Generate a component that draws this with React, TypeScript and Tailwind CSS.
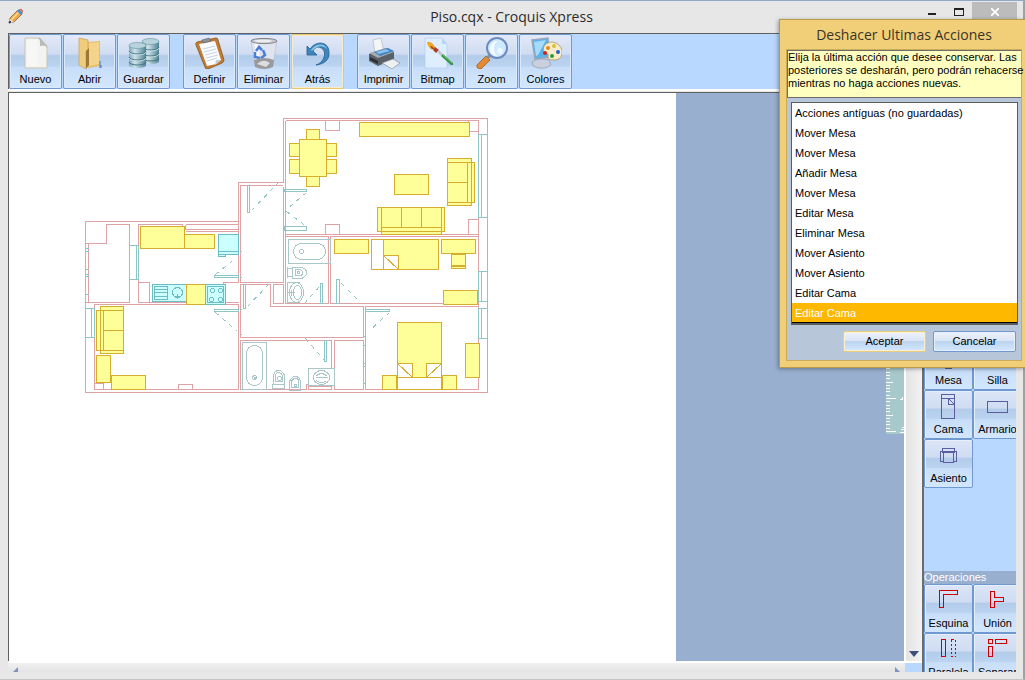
/**
 * Croquis Xpress — floor plan editor with the undo history dialog open.
 */
import type { ReactNode } from "react";

type Box = [x: number, y: number, w: number, h: number];
type Line = [x1: number, y1: number, x2: number, y2: number];

const HISTORY = [
  "Acciones antíguas (no guardadas)",
  "Mover Mesa",
  "Mover Mesa",
  "Añadir Mesa",
  "Mover Mesa",
  "Editar Mesa",
  "Eliminar Mesa",
  "Mover Asiento",
  "Mover Asiento",
  "Editar Cama",
  "Editar Cama",
];

/* ---------- toolbar icons ---------- */

function NewIcon() {
  return (
    <svg viewBox="0 0 32 32" className="size-8">
      <path d="M5 1h15l7 8v22H5z" fill="#f3f3f1" stroke="#c9c5b2" />
      <path d="M17 1c4 1 3 5 3 8 3-1 6-1 7 2V9l-7-8z" fill="#b9b9b7" />
      <path d="M7 3h10v26H7z" fill="#fafafa" opacity=".6" />
    </svg>
  );
}

function OpenIcon() {
  return (
    <svg viewBox="0 0 32 32" className="size-8">
      <path d="M14 5l12-1v25l-12 2z" fill="#e8bf68" />
      <path d="M15 6l10-1v22l-10 2z" fill="#f4d48a" />
      <path d="M5 1l9 2v9l-2 3v17l-7-4z" fill="#f0cd7c" stroke="#d0a248" strokeWidth=".7" />
      <path d="M12 14l3-3v17l-3 4z" fill="#9b7838" />
      <path d="M26 24v7M27 28v3" stroke="#3f78c0" />
    </svg>
  );
}

function Drum({ x, y }: { x: number; y: number }) {
  return (
    <g transform={`translate(${x} ${y})`}>
      <path d="M0 3v20c0 4 17 4 17 0V3z" fill="url(#drum)" />
      <ellipse cx="8.5" cy="3.5" rx="8.5" ry="3" fill="#b8d3dc" stroke="#5f909f" strokeWidth=".6" />
      <path d="M0 9c1 4 16 4 17 0M0 15c1 4 16 4 17 0M0 20c1 4 16 4 17 0" fill="none" stroke="#3f7484" />
      <path d="M0 10c1 4 16 4 17 0M0 16c1 4 16 4 17 0" fill="none" stroke="#d6e8ee" strokeWidth=".8" />
    </g>
  );
}

function SaveIcon() {
  return (
    <svg viewBox="0 0 32 32" className="size-8">
      <defs>
        <linearGradient id="drum">
          <stop offset="0" stopColor="#7fa9b7" />
          <stop offset=".35" stopColor="#cfe2e8" />
          <stop offset="1" stopColor="#4d8293" />
        </linearGradient>
      </defs>
      <Drum x={14} y={1} />
      <Drum x={1} y={5} />
    </svg>
  );
}

function DefineIcon() {
  return (
    <svg viewBox="0 0 32 32" className="size-8">
      <path d="M3 5L22 1q2 0 2 2l6 20q0 2-2 3l-14 6q-3 0-3-2L2 8q-1-2 1-3z" fill="#c17d32" stroke="#8a5218" strokeWidth=".8" />
      <path d="M5 7l16-3 6 19-5 4-9 2z" fill="#fbfcff" />
      <path d="M9 12l12-3M10 15l12-3M11 18l12-3M12 21l12-3M13 24l10-3" stroke="#bfcde0" strokeWidth=".9" />
      <path d="M8 3l7-2 2 3-8 2z" fill="#8d9299" stroke="#5c6066" strokeWidth=".6" />
      <path d="M21 28l1-5 5 0z" fill="#c3cbda" />
    </svg>
  );
}

function BinIcon() {
  return (
    <svg viewBox="0 0 32 32" className="size-8">
      <path d="M3 4l4 25q9 5 18 0l4-25z" fill="#dfe4ee" stroke="#b4b9c6" strokeWidth=".6" />
      <path d="M6 4l3 22h3L10 4z" fill="#f8faff" />
      <path d="M6 23l1 7q9 4 18 0l1-7q-10-4-20 0z" fill="#9a9a9e" />
      <path d="M9 27q6-6 13-1l-4 4z" fill="#dddde0" />
      <ellipse cx="16" cy="4" rx="13" ry="2.600" fill="#c7c9ce" stroke="#85888f" />
      <ellipse cx="15" cy="4" rx="9" ry="1.300" fill="#eceef2" />
      <path d="M8 14l3-4 3 3M15 13l2 5-4 3M12 21l-5-1 0-5" fill="none" stroke="#4a7fd6" strokeWidth="2.500" />
    </svg>
  );
}

function UndoIcon() {
  return (
    <svg viewBox="0 0 32 32" className="size-8">
      <path
        d="M5 9l3 3C14 3 28 4 27 17c0 6-5 10-13 11 10-3 12-17 2-18-2 0-4 2-5 4l4 4H5z"
        fill="#3f86bd"
        stroke="#24608f"
        strokeWidth=".8"
      />
      <path d="M9 13c5-7 14-7 16-1-4-4-10-4-15 2z" fill="#8cc2e6" />
    </svg>
  );
}

function PrintIcon() {
  return (
    <svg viewBox="0 0 32 32" className="size-8">
      <path d="M5 3l8-2 3 14-9 2z" fill="#f4f5f7" stroke="#b5b8bd" strokeWidth=".7" />
      <path d="M1 17l17-6 8 4v7l-16 7-9-5z" fill="#5a6068" />
      <path d="M1 16l17-5 8 4-16 6z" fill="#a3abb4" />
      <path d="M6 15l14-4 6 3-14 5z" fill="#3f83c3" />
      <path d="M8 15l10-3 4 2-11 3z" fill="#8bc0ea" />
      <path d="M14 26l11-4 7 4-8 6z" fill="#eef0f2" stroke="#8b8f95" strokeWidth=".7" />
      <path d="M2 20l8 4v3l-8-4z" fill="#2b2f35" />
    </svg>
  );
}

function BitmapIcon() {
  return (
    <svg viewBox="0 0 32 32" className="size-8">
      <path d="M3 1h17l5 6v24H3z" fill="#dfeeff" stroke="#b3cdeb" strokeWidth=".7" />
      <path d="M20 1v6h5z" fill="#b9d4f2" />
      <path d="M5 5q3-1 6 2l3 4-2 2q-6-1-7-8z" fill="#f0a528" />
      <path d="M8 9q3 0 4 3l-2 0z" fill="#9a4a10" />
      <path d="M13 10l4 3-3 3-3-3z" fill="#b03a2c" />
      <path d="M17 13l4 4-2 2-4-4z" fill="#c3c6cc" />
      <path d="M21 17l10 9v2l-2 0-10-9z" fill="#2f9340" />
      <path d="M21 18l9 8" stroke="#8bdc90" strokeWidth=".7" />
    </svg>
  );
}

function ZoomIcon() {
  return (
    <svg viewBox="0 0 32 32" className="size-8">
      <path d="M1 28l9-9 4 4-9 9q-5 0-4-4z" fill="#e28a35" stroke="#a65a1a" strokeWidth=".8" />
      <path d="M10 20l4-4 2 2-3 4z" fill="#8c9099" />
      <circle cx="21" cy="11" r="10" fill="#cfeafc" stroke="#6d8bc0" strokeWidth="2" />
      <path d="M14 11q1-7 8-7-4 2-4 7t3 8q-7-1-7-8z" fill="#fff" opacity=".8" />
      <circle cx="24" cy="14" r="3" fill="#fff" opacity=".6" />
    </svg>
  );
}

function ColorsIcon() {
  return (
    <svg viewBox="0 0 32 32" className="size-8">
      <path d="M2 3l16-2 1 19-14 2z" fill="#5db2ec" stroke="#98a7bb" strokeWidth="1.500" />
      <path d="M4 5l12-2-8 15-2 1z" fill="#a6dcfa" />
      <path d="M2 25q6-5 17-2l2 5q-8 6-18 1z" fill="#c9cfdc" stroke="#949cad" strokeWidth=".7" />
      <path d="M14 9q5-6 12-3 7 4 6 11-1 6-8 6-6 0-6-3 1-4-3-4-3-3-1-7z" fill="#f8ecc9" stroke="#a99663" strokeWidth=".8" />
      <circle cx="18" cy="11" r="2" fill="#e08a20" />
      <circle cx="24" cy="9" r="2" fill="#d8c038" />
      <circle cx="15" cy="16" r="2" fill="#c82820" />
      <circle cx="28" cy="15" r="2" fill="#2860c8" />
      <circle cx="22" cy="19" r="2" fill="#2f9a3a" />
    </svg>
  );
}

function PencilIcon() {
  return (
    <svg viewBox="0 0 16 16" className="size-4">
      <path d="M1 15l1-5 8-8 4 4-8 8z" fill="#f0a848" stroke="#7d5320" strokeWidth=".7" />
      <path d="M3 11l8-8 1 1-8 8z" fill="#fbdc9c" />
      <path d="M1 15l1-4 4 3z" fill="#f6e6cc" />
      <path d="M1 15l1-2 1 1z" fill="#223a66" stroke="#223a66" />
      <path d="M9 3l2-2 4 4-2 2z" fill="#4a90cf" />
      <path d="M11 1q3-1 4 2v2z" fill="#d86a50" />
    </svg>
  );
}

const TOOL_GROUPS: { label: string; icon: ReactNode; active?: boolean }[][] = [
  [
    { label: "Nuevo", icon: <NewIcon /> },
    { label: "Abrir", icon: <OpenIcon /> },
    { label: "Guardar", icon: <SaveIcon /> },
  ],
  [
    { label: "Definir", icon: <DefineIcon /> },
    { label: "Eliminar", icon: <BinIcon /> },
    { label: "Atrás", icon: <UndoIcon />, active: true },
  ],
  [
    { label: "Imprimir", icon: <PrintIcon /> },
    { label: "Bitmap", icon: <BitmapIcon /> },
    { label: "Zoom", icon: <ZoomIcon /> },
    { label: "Colores", icon: <ColorsIcon /> },
  ],
];

function ToolButton({ label, icon, active }: { label: string; icon: ReactNode; active?: boolean }) {
  return (
    <button
      className={
        "flex h-[55px] w-[53px] flex-col items-center rounded-[2px] border bg-[linear-gradient(#e3e9f8,#d0dcf2_36%,#b3ccea_39%,#b9d3f0_58%,#c8def8_61%,#d2e7ff)] pt-[2px] " +
        (active
          ? "border-[#ecc66c] shadow-[inset_0_0_0_1px_#f8ecc8]"
          : "border-[#6f99d0] shadow-[inset_0_0_0_1px_#dce9fb]")
      }
    >
      {icon}
      <span className="mt-1 leading-3">{label}</span>
    </button>
  );
}

/* ---------- side palette ---------- */

function PaletteButton({ label, children }: { label: string; children: ReactNode }) {
  return (
    <button className="flex h-[49px] w-[49px] shrink-0 flex-col items-center rounded-[2px] border border-[#6f99d0] bg-[linear-gradient(#dbe5f6,#cfdcf2_36%,#b3ccea_39%,#b9d3f0_58%,#c8def8_61%,#d2e7ff)] pt-px shadow-[inset_1px_1px_0_#e6effc]">
      <svg viewBox="0 0 30 30" className="h-[30px] w-[30px]" fill="none" stroke="currentColor" shapeRendering="crispEdges">
        <g transform="translate(.5 .5)">{children}</g>
      </svg>
      <span className="mt-px leading-3 text-black">{label}</span>
    </button>
  );
}

function Palette() {
  return (
    <aside className="flex w-[94px] shrink-0 flex-col overflow-hidden border-l-2 border-[#6c6c6c] bg-[#b9d8ff]">
      <div className="flex w-[98px] flex-wrap pt-[249px] text-[#5c5ca0]">
        <PaletteButton label="Mesa">
          <path d="M5 8h18v14H5zM11 22h6v3h-6z" />
        </PaletteButton>
        <PaletteButton label="Silla">
          <path d="M9 8h11v11H9zM9 5h11" />
        </PaletteButton>
        <PaletteButton label="Cama">
          <path d="M7 2h13v24H7zM7 6h13M14 6v6h6M14 6l6 6" />
        </PaletteButton>
        <PaletteButton label="Armario">
          <path d="M4 9h20v11H4z" />
        </PaletteButton>
        <PaletteButton label="Asiento">
          <path d="M8 7h12v4H8zM9 10h10v11H9zM6 10h3v10H6zM19 10h3v10h-3z" />
        </PaletteButton>
      </div>
      <div className="mt-auto h-[101px] overflow-hidden">
        <h2 className="bg-[#99afd0] leading-[13px] text-white">Operaciones</h2>
        <div className="flex w-[98px] flex-wrap text-[#cc0000]">
          <PaletteButton label="Esquina">
            <path d="M5 4h18v4H9v13H5z" />
          </PaletteButton>
          <PaletteButton label="Unión">
            <path d="M7 5h4v6h9v4h-9v6H7z" />
          </PaletteButton>
          <PaletteButton label="Paralela">
            <path d="M7 4h4v17H7z" />
            <path d="M17 4h4v17h-4z" strokeDasharray="2 2" />
          </PaletteButton>
          <PaletteButton label="Separar">
            <path d="M5 4h4v4H5zM12 4h11v4H12zM5 11h4v10H5z" />
          </PaletteButton>
        </div>
      </div>
    </aside>
  );
}

/* ---------- floor plan ---------- */

const FURNITURE: Box[] = [
  // dining table and chairs
  [306, 129, 13, 10], [306, 176, 13, 10], [289, 143, 10, 13], [289, 159, 10, 14],
  [326, 143, 10, 13], [326, 159, 10, 14], [299, 139, 27, 37],
  // living room
  [359, 122, 110, 14], [394, 174, 34, 20], [447, 158, 24, 47], [467, 162, 7, 40],
  [447, 162, 20, 20], [447, 182, 20, 20], [377, 207, 67, 24], [381, 207, 20, 20],
  [401, 207, 20, 20], [421, 207, 20, 20], [381, 227, 60, 7],
  // kitchen
  [140, 226, 44, 22], [184, 234, 30, 14], [186, 284, 19, 20],
  // study
  [100, 306, 23, 47], [96, 310, 7, 40], [103, 310, 20, 20], [103, 330, 20, 20],
  [96, 355, 14, 27], [111, 375, 34, 14],
  // small bedroom
  [334, 239, 34, 14], [383, 239, 55, 30], [441, 239, 34, 14], [451, 254, 14, 14],
  [451, 265, 14, 1], [443, 290, 34, 14],
  // main bedroom
  [397, 322, 44, 67], [382, 375, 14, 14], [442, 375, 14, 14], [465, 343, 14, 34],
];

const LINEN: Box[] = [
  [371, 239, 12, 30], [383, 255, 15, 14],
  [397, 377, 44, 12], [397, 363, 15, 14], [426, 363, 15, 14],
];

const DOORS: Box[] = [
  [214, 275, 24, 2], [214, 309, 24, 2], [247, 185, 2, 27], [284, 189, 22, 2],
  [284, 226, 22, 4], [320, 283, 2, 20], [336, 279, 3, 24], [243, 284, 2, 24],
  [324, 340, 2, 21], [365, 309, 24, 2],
];

const SWINGS: Line[] = [
  [215, 274, 236, 257], [215, 312, 237, 331], [251, 210, 277, 183], [306, 192, 286, 209],
  [286, 211, 306, 226], [304, 303, 320, 285], [341, 283, 360, 302], [247, 306, 268, 284],
  [305, 338, 324, 360], [389, 312, 369, 330],
];

const WINDOWS: Box[] = [
  [129, 245, 9, 34], [85, 308, 9, 29], [478, 134, 9, 83], [478, 271, 9, 30], [478, 308, 9, 30],
];

const WALLS = [
  "M85 392V221H238V182H283V118H487V392Z",
  "M85 243H106V224H129V302H85M88 243V302",
  "M138 302V224H182V226M185 224V229H238M185 224H238M185 231H238",
  "M138 282H149V302M237 282H223V302M138 302H238",
  "M238 221V282M238 304H94V389H238ZM94 383H103V389M178 389V384H192V389",
  "M282 185H240V282H283V186M285 120H478V389H365V306H478M285 120V303H328M468 120V131H478",
  "M325 120V130H339V120M325 234V224H339V234M468 234V219H478M285 234H478",
  "M285 236H328V303M330 303V236H478M330 303H478",
  "M240 284H270V306H363V337H240ZM273 284H283V303H273Z",
  "M331 368V340H240V389H306V384H308M308 386H331V389H308ZM334 340H363V389H334Z",
];

const boxPath = ([x, y, w, h]: Box) => `M${x} ${y}h${w}v${h}h${-w}z`;
const linePath = ([x1, y1, x2, y2]: Line) => `M${x1} ${y1}L${x2} ${y2}`;

function FloorPlan() {
  return (
    <svg viewBox="80 110 412 288" className="mt-[17px] ml-[71px] h-[288px] w-[412px]" fill="none" shapeRendering="crispEdges">
      <g transform="translate(.5 .5)">
        <path d={WALLS.join("")} stroke="#e0a3a5" />

        <g stroke="#8fc5c7">
          <path d={[...DOORS, ...WINDOWS].map(boxPath).join("")} />
          <path d="M136 245V279M91 308V337M481 134V217M481 271V301M481 308V338" />
          <path d="M85 248h3M85 251h3M85 269h3M85 274h3M85 276h3M85 294h3M239 251h2M239 277h2M239 309h2M239 334h2" />
          <path d="M363 336h2M363 345h2M363 363h2M363 366h2M363 383h2" />
          <path d={SWINGS.map(linePath).join("")} strokeDasharray="4 5" />
        </g>

        {/* bathroom fixtures */}
        <g stroke="#a9c7c8">
          <path d="M288 239h42v24h-42zM242 342h24v47h-24z" />
          <rect x="293" y="243" width="32" height="16" rx="8" />
          <rect x="246" y="345" width="16" height="40" rx="8" />
          <circle cx="301" cy="251" r="2" />
          <circle cx="254" cy="377" r="2" />
          <path d="M253 376l3 3M256 376l-3 3" />
          <path d="M287 266v11M287 268h5v8h-5M292 267h9q5 1 5 5t-5 6h-9zM295 269h4q3 0 3 3t-3 3h-4z" />
          <circle cx="298" cy="272" r="1" />
          <path d="M299 282H287V302H299M287 292h7M291 289v6" />
          <ellipse cx="296" cy="292" rx="7" ry="10" />
          <ellipse cx="297" cy="292" rx="4" ry="7" />
          <path d="M272 388v-4h12v4zM273 384v-9q1-5 5-5t6 5v9M275 381v-5q0-4 3-4t4 4v5z" />
          <circle cx="279" cy="378" r="2" />
          <path d="M289 390h11v-9q-1-5-5-5t-6 5zM291 387v-5q0-4 4-4t3 4v5z" />
          <circle cx="295" cy="385" r="1" />
          <path d="M308 368h26v17h-26z" />
          <ellipse cx="321" cy="377" rx="8" ry="7" />
          <path d="M315 376q6-6 12 0M315 377h12M316 380q5 4 10 0" />
        </g>

        {/* kitchen units */}
        <g fill="#ccffff" stroke="#6dbcc4">
          <path d="M218 234h20v20h-20zM218 251h20M218 254h7v2h-7zM152 284h34v17h-34z" />
          <path d="M154 286h13v13h-13zM154 289h13M154 292h13M154 296h13" />
          <circle cx="177" cy="292" r="5" />
          <path d="M177 293v5M175 296h4" />
        </g>

        <path d={FURNITURE.map(boxPath).join("")} fill="#ffff99" stroke="#d6ae2e" />
        <path d={LINEN.map(boxPath).join("")} fill="#ffffff" stroke="#d6ae2e" />
        <path d="M383 255L398 269M397 363L412 377M441 363L426 377" stroke="#d6ae2e" />

        <g fill="#ccffff" stroke="#6dbcc4">
          <path d="M205 284h20v20h-20zM207 286h16v16h-16z" />
          <circle cx="212" cy="290" r="2" />
          <circle cx="220" cy="290" r="2" />
          <circle cx="211" cy="299" r="2" />
          <circle cx="220" cy="299" r="2" />
        </g>
      </g>
    </svg>
  );
}

function Ruler() {
  const ticks = Array.from({ length: 100 }, (_, i) => {
    const y = Math.round(338 - i * 3.3);
    const length = i % 10 === 0 ? 10 : i % 5 === 0 ? 7 : 4;
    return `M0 ${y}h${length}`;
  });
  return (
    <svg viewBox="0 0 18 341" className="h-[341px] w-[18px] bg-[#a7c9cb]" stroke="#ffffff" fill="none" shapeRendering="crispEdges">
      <g transform="translate(0 .5)">
        <path d={ticks.join("")} />
        <path d="M14 306h2M16 303v3M15 336h3M14 339h4M16 334h2" />
      </g>
    </svg>
  );
}

function Workspace() {
  return (
    <div className="flex min-w-0 flex-1 flex-col">
      <div className="flex min-h-0 flex-1">
        <main className="flex min-w-0 flex-1 overflow-hidden border-t border-l border-[#606060] bg-[#99afd0]">
          <div className="w-[74.5%] shrink-0 bg-white">
            <FloorPlan />
          </div>
          <div className="flex flex-1 justify-end">
            <Ruler />
          </div>
        </main>
        <div className="flex w-[18px] shrink-0 flex-col items-center justify-end border-l-2 border-white bg-linear-to-r from-[#e4e4e4] to-[#f2f2f2] pb-1">
          <svg viewBox="0 0 10 6" className="h-[6px] w-[10px]">
            <path d="M0 0h10L5 6z" fill="#3c5078" />
          </svg>
        </div>
      </div>
      <div className="flex h-[11px] shrink-0 border-t-2 border-white bg-[#b9d8ff]">
        <div className="flex flex-1 items-end justify-between bg-linear-to-b from-[#f0f0f0] to-[#e4e4e4] pr-[5px] pl-[5px]">
          <svg viewBox="0 0 5 5" className="size-[5px]">
            <path d="M0 5L5 0v5z" fill="#7d93bb" />
          </svg>
          <svg viewBox="0 0 5 5" className="size-[5px]">
            <path d="M0 0l5 5H0z" fill="#7d93bb" />
          </svg>
        </div>
        <div className="w-[17px]" />
      </div>
    </div>
  );
}

/* ---------- dialog ---------- */

function DialogButton({ label, primary }: { label: string; primary?: boolean }) {
  return (
    <button
      className={
        "h-[21px] w-[83px] rounded-[2px] border bg-[linear-gradient(#eef2fb,#dbe5f6_45%,#bdd4ef_50%,#d3e8ff)] " +
        (primary
          ? "border-[#e8cd80] shadow-[inset_0_0_0_1px_#faf0d0]"
          : "border-[#6f99d0] shadow-[inset_0_0_0_1px_#e6effb]")
      }
    >
      {label}
    </button>
  );
}

function UndoDialog() {
  return (
    <section
      role="dialog"
      aria-labelledby="undo-title"
      className="absolute top-[19px] right-0 z-10 flex w-[246px] flex-col border border-r-0 border-[#b89a4a] bg-[#f0cf78] pr-[3px] pb-[6px] pl-[6px] shadow-[-1px_1px_4px_rgba(0,0,0,0.35)]"
    >
      <h2 id="undo-title" className="text-center font-['Open_Sans',sans-serif] text-[14px] leading-[29px] text-[#3a3428]">
        Deshacer Ultimas Acciones
      </h2>
      <div className="border border-[#c9ab58] bg-[#b7c7d9]">
        <p className="h-[48px] border border-r-0 border-[#6c6c6c] bg-[#ffffc0] leading-[13px] whitespace-nowrap">
          Elija la última acción que desee conservar. Las
          <br />
          posteriores se desharán, pero podrán rehacerse
          <br />
          mientras no haga acciones nuevas.
        </p>
        <ul className="mt-1 mr-[3px] ml-1 border border-b-2 border-[#5c5c5c] bg-white">
          {HISTORY.map((action, index) => (
            <li key={index}>
              <button
                className={
                  "h-5 w-full pl-[3px] text-left " +
                  (index === HISTORY.length - 1 ? "bg-[#ffb800] text-white shadow-[inset_0_-1px_0_#000]" : "")
                }
              >
                {action}
              </button>
            </li>
          ))}
        </ul>
        <div className="mt-[6px] mr-[5px] mb-2 flex justify-end gap-[7px]">
          <DialogButton label="Aceptar" primary />
          <DialogButton label="Cancelar" />
        </div>
      </div>
    </section>
  );
}

/* ---------- window ---------- */

function TitleBar() {
  return (
    <header className="grid h-8 shrink-0 grid-cols-[1fr_auto_1fr] items-center">
      <div className="pb-[2px] pl-2">
        <PencilIcon />
      </div>
      <h1 className="pb-[2px] font-['Open_Sans',sans-serif] text-[14px] text-[#2b2b2b]">Piso.cqx - Croquis Xpress</h1>
      <div className="flex h-full items-start justify-end pr-[6px]">
        <button aria-label="Minimizar" className="flex h-5 w-[26px] justify-center pt-3">
          <span className="h-[2px] w-2 bg-[#222]" />
        </button>
        <button aria-label="Maximizar" className="flex h-5 w-[27px] justify-center pt-[7px]">
          <span className="h-2 w-[10px] border border-t-2 border-[#222]" />
        </button>
        <button aria-label="Cerrar" className="mt-px flex h-5 w-[45px] items-center justify-center bg-[#bcbcbc]">
          <svg viewBox="0 0 8 8" className="size-2" stroke="#fff" strokeWidth="1.800">
            <path d="M0 0l8 8M8 0L0 8" />
          </svg>
        </button>
      </div>
    </header>
  );
}

export default function App() {
  return (
    <div className="relative h-screen w-full overflow-hidden font-['Liberation_Sans',Arial,sans-serif] text-[11px] text-black">
      <div className="flex h-full flex-col border-t border-r-2 border-b border-t-[#8fa9c4] border-r-[#a3a0a2] border-b-[#c4c4c4] bg-[#e7e7e7]">
        <TitleBar />
        <div className="mr-[7px] mb-[7px] ml-2 flex min-h-0 flex-1 flex-col">
          <nav className="flex shrink-0 gap-[13px] border-t border-l border-[#606060] bg-[#b9d8ff]">
            {TOOL_GROUPS.map((group, index) => (
              <div key={index} className="flex gap-px">
                {group.map((tool) => (
                  <ToolButton key={tool.label} {...tool} />
                ))}
              </div>
            ))}
          </nav>
          <div className="h-[3px] shrink-0 border-t-2 border-white" />
          <div className="flex min-h-0 flex-1">
            <Workspace />
            <Palette />
          </div>
        </div>
      </div>
      <UndoDialog />
    </div>
  );
}
